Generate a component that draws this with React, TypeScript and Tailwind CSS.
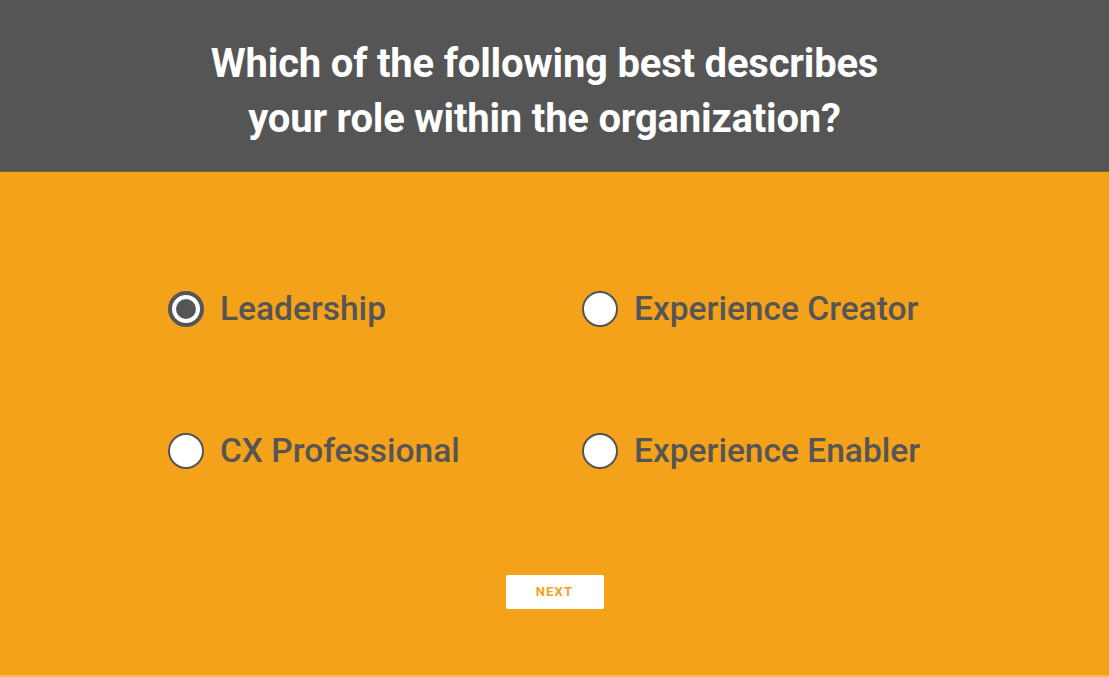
import React, { useState } from "react";

const options = [
  "Leadership",
  "Experience Creator",
  "CX Professional",
  "Experience Enabler",
];

function Radio({ selected }: { selected: boolean }) {
  return selected ? (
    <span className="flex h-[36px] w-[36px] shrink-0 items-center justify-center rounded-full border-[4px] border-[#555555] bg-white">
      <span className="h-[20px] w-[20px] rounded-full bg-[#555555]" />
    </span>
  ) : (
    <span className="h-[36px] w-[36px] shrink-0 rounded-full border-2 border-[#555555] bg-white" />
  );
}

export default function App() {
  const [sel, setSel] = useState(0);
  return (
    <div className="flex h-[677px] w-[1109px] flex-col" style={{ fontFamily: "Roboto, 'Liberation Sans', sans-serif" }}>
      <div className="flex h-[172px] flex-col items-center justify-center border-b border-[#6b6a4a] bg-[#555555] pt-[10px] pr-[20px]">
        <h1 className="text-center text-[40px] font-bold leading-[55px] tracking-[-0.2px] text-white">
          Which of the following best describes
          <br />
          your role within the organization?
        </h1>
      </div>
      <div className="flex flex-1 flex-col items-center bg-[#f4a219] border-b-2 border-[#f7b84a]">
        <div className="mt-[119px] ml-[109px] grid grid-cols-[414px_360px] gap-y-[106px] self-start pl-[59px]">
          {options.map((o, i) => (
            <button
              key={o}
              onClick={() => setSel(i)}
              className="flex h-[36px] items-center gap-[16px] text-left"
            >
              <Radio selected={sel === i} />
              <span className="whitespace-nowrap text-[33.5px] font-medium leading-none text-[#555555]">{o}</span>
            </button>
          ))}
        </div>
        <button className="mt-[106px] flex h-[34px] w-[98px] items-center justify-center rounded-[2px] bg-white text-[13px] font-bold tracking-[1.2px] text-[#f4a219]">
          NEXT
        </button>
      </div>
    </div>
  );
}
